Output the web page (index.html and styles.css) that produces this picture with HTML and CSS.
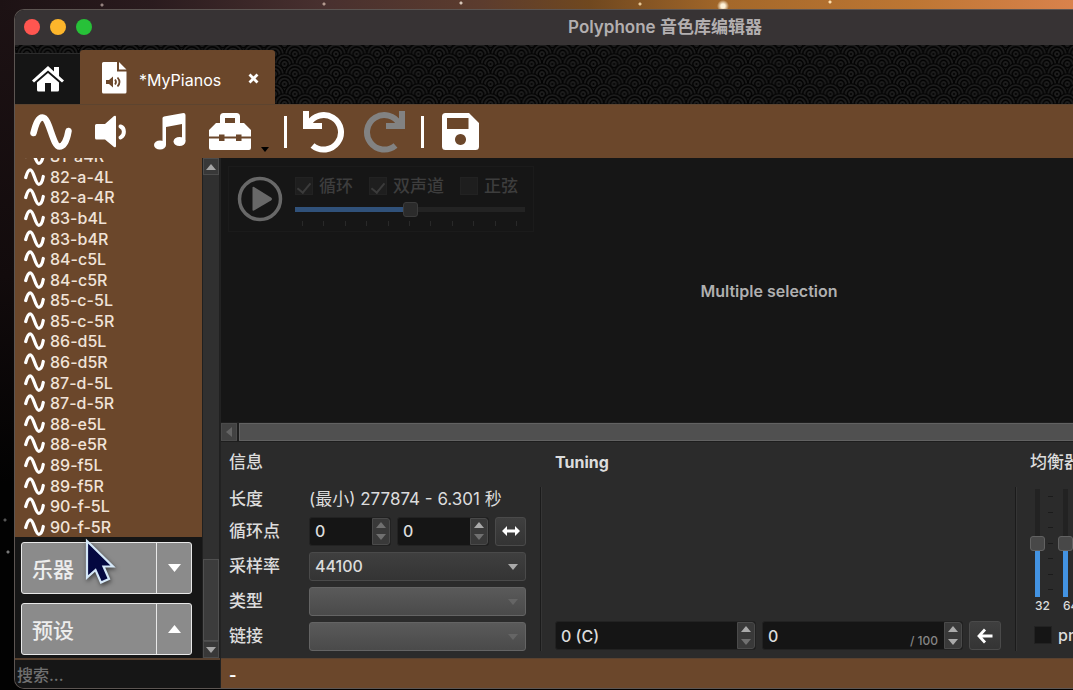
FILE: index.html
```html
<!DOCTYPE html>
<html lang="zh-CN">
<head>
<meta charset="utf-8">
<title>Polyphone 音色库编辑器</title>
<link rel="stylesheet" href="styles.css">
</head>
<body>
<svg class="defs" aria-hidden="true">
  <defs>
    <symbol id="wave" viewBox="0 0 42 36"><path d="M3.500 19C6 9 8.500 3.500 12.500 3.500C19.500 3.500 22.500 32.500 29.500 32.500C34 32.500 37 26 38.500 17" fill="none" stroke="#fff" stroke-width="6.500" stroke-linecap="round"/></symbol>
    <symbol id="up" viewBox="0 0 10 6"><path d="M0 6L5 0L10 6Z" fill="currentColor"/></symbol>
    <symbol id="down" viewBox="0 0 10 6"><path d="M0 0L5 6L10 0Z" fill="currentColor"/></symbol>
    <g id="scale"><circle r="10.800" stroke="none"/><circle r="8.800"/><circle r="5.300"/><circle r="2"/></g>
    <pattern id="scales" width="20.6" height="20" x="12" y="9" patternUnits="userSpaceOnUse">
      <g fill="#030303" stroke="#1d1d1d" stroke-width="1.8">
        <use href="#scale" x="10.3" y="-10"/>
        <use href="#scale"/><use href="#scale" x="20.6"/>
        <use href="#scale" x="10.3" y="10"/>
        <use href="#scale" y="20"/><use href="#scale" x="20.6" y="20"/>
        <use href="#scale" x="10.3" y="30"/>
      </g>
    </pattern>
  </defs>
</svg>

<div class="window">
  <header class="titlebar">
    <div class="lights"><button class="light red" aria-label="关闭"></button><button class="light yellow" aria-label="最小化"></button><button class="light green" aria-label="缩放"></button></div>
    <h1 class="title">Polyphone 音色库编辑器</h1>
  </header>

  <nav class="tabs">
    <svg class="tabs-pattern" aria-hidden="true"><rect width="100%" height="100%" fill="url(#scales)"/></svg>
    <button class="tab home" aria-label="主页">
      <svg width="32" height="26" viewBox="0 0 32 26" fill="#fff"><path d="M16 0L22 5.4V1H27V10L32 14.4L30 16.6L16 4.6L2 16.6L0 14.4Z"/><path d="M16 7L27 16.5V24Q27 25.5 25.5 25.5H19V17H13V25.5H6.500Q5 25.500 5 24V16.500Z"/></svg>
    </button>
    <div class="tab active">
      <svg width="25" height="32" viewBox="0 0 25 32"><path d="M1.500 0H15V9.500H24.500V30Q24.500 31.500 23 31.500H1.500Q0 31.500 0 30V1.500Q0 0 1.500 0ZM17 0L24.500 7.500H17Z" fill="#fff"/><path d="M4 18H7L11 14.500V25.500L7 22H4Z" fill="#6b472b"/><path d="M13 17.500Q15 20 13 22.500M15.500 15.500Q19.500 20 15.500 24.500" fill="none" stroke="#6b472b" stroke-width="1.800"/></svg>
      <span class="tab-name">*MyPianos</span>
      <button class="close" aria-label="关闭标签"><svg width="11" height="11" viewBox="0 0 11 11"><path d="M1.500 1.500L9.500 9.500M9.500 1.500L1.500 9.500" stroke="#fff" stroke-width="2.800"/></svg></button>
    </div>
  </nav>

  <div class="toolbar">
    <button class="tool" aria-label="采样"><svg width="42" height="36"><use href="#wave"/></svg></button>
    <button class="tool" aria-label="乐器"><svg width="32" height="34" viewBox="0 0 32 34"><path d="M1.500 9H10L19 1Q21 0 21 2V31Q21 33 19 32L10 24.500H1.500Q0 24.500 0 23V10.500Q0 9 1.500 9Z" fill="#fff"/><path d="M25.500 11.500C30 13 30 20.500 25.500 22.500" fill="none" stroke="#fff" stroke-width="4" stroke-linecap="round"/></svg></button>
    <button class="tool" aria-label="预设"><svg width="32" height="37" viewBox="0 0 32 37"><path d="M8.500 5Q8.500 4 10 3.500L29.500 0Q31.500 0 31.500 2V28H28V11L12 14V32H8.500Z" fill="#fff"/><ellipse cx="6" cy="32" rx="6" ry="4.500" fill="#fff"/><ellipse cx="25.500" cy="28.500" rx="6" ry="4.500" fill="#fff"/></svg></button>
    <button class="tool" aria-label="工具箱"><svg width="42" height="37" viewBox="0 0 42 37"><path d="M13.500 11V3.500Q13.500 2.500 14.500 2.500H27.500Q28.500 2.500 28.500 3.500V11" fill="none" stroke="#fff" stroke-width="5"/><path d="M7 10H35L42 17V23.500H32.500V21.500H27V23.500H15.500V21.500H10V23.500H0V17Z" fill="#fff"/><path d="M0 25.500H10V28H15.500V25.500H27V28H32.500V25.500H42V35Q42 37 40 37H2Q0 37 0 35Z" fill="#fff"/></svg></button>
    <svg class="tool-more" width="8" height="5"><use href="#down"/></svg>
    <span class="rule"></span>
    <button class="tool" aria-label="撤消"><svg width="42" height="42" viewBox="0 0 42 42"><path d="M5.500 13A17.300 17.300 0 1 1 9.500 34.500" fill="none" stroke="#fff" stroke-width="6"/><path d="M0 0H6V9L10 12H19V18H0Z" fill="#fff"/></svg></button>
    <button class="tool" disabled aria-label="重做"><svg width="42" height="42" viewBox="0 0 42 42"><path d="M36.500 13A17.300 17.300 0 1 0 32.500 34.500" fill="none" stroke="#828282" stroke-width="6"/><path d="M42 0H36V9L32 12H23V18H42Z" fill="#828282"/></svg></button>
    <span class="rule"></span>
    <button class="tool" aria-label="保存"><svg width="37" height="37" viewBox="0 0 37 37"><path fill-rule="evenodd" d="M3.500 0H27L37 10V33.500Q37 37 33.500 37H3.500Q0 37 0 33.500V3.500Q0 0 3.500 0ZM5 5V16H26.500V5ZM18.500 21A5.500 5.500 0 1 0 18.510 21Z" fill="#fff"/></svg></button>
  </div>

  <div class="content">
    <aside class="sidebar">
      <div class="tree">
        <div class="tree-body">
          <div class="samples-clip">
            <ul class="samples">
              <li><svg><use href="#wave"/></svg>81-a4R</li>
              <li><svg><use href="#wave"/></svg>82-a-4L</li>
              <li><svg><use href="#wave"/></svg>82-a-4R</li>
              <li><svg><use href="#wave"/></svg>83-b4L</li>
              <li><svg><use href="#wave"/></svg>83-b4R</li>
              <li><svg><use href="#wave"/></svg>84-c5L</li>
              <li><svg><use href="#wave"/></svg>84-c5R</li>
              <li><svg><use href="#wave"/></svg>85-c-5L</li>
              <li><svg><use href="#wave"/></svg>85-c-5R</li>
              <li><svg><use href="#wave"/></svg>86-d5L</li>
              <li><svg><use href="#wave"/></svg>86-d5R</li>
              <li><svg><use href="#wave"/></svg>87-d-5L</li>
              <li><svg><use href="#wave"/></svg>87-d-5R</li>
              <li><svg><use href="#wave"/></svg>88-e5L</li>
              <li><svg><use href="#wave"/></svg>88-e5R</li>
              <li><svg><use href="#wave"/></svg>89-f5L</li>
              <li><svg><use href="#wave"/></svg>89-f5R</li>
              <li><svg><use href="#wave"/></svg>90-f-5L</li>
              <li><svg><use href="#wave"/></svg>90-f-5R</li>
            </ul>
          </div>
          <div class="groups">
            <div class="group"><button class="group-name">乐器</button><button class="group-toggle" aria-label="展开乐器"><svg width="13" height="8"><use href="#down"/></svg></button></div>
            <div class="group"><button class="group-name">预设</button><button class="group-toggle" aria-label="折叠预设"><svg width="13" height="8"><use href="#up"/></svg></button></div>
          </div>
        </div>
        <div class="vscroll">
          <button class="scroll-btn" aria-label="向上滚动"><svg width="10" height="6"><use href="#up"/></svg></button>
          <div class="vthumb"></div>
          <button class="scroll-btn" aria-label="向下滚动"><svg width="10" height="6"><use href="#down"/></svg></button>
        </div>
      </div>
      <input class="search" type="text" placeholder="搜索..." aria-label="搜索">
      <svg class="pointer" width="32" height="48" viewBox="0 0 32 48" aria-hidden="true"><path d="M2 3L28 28.500H18.500L24 41L16 44.500L10.500 32L2 39.500Z" fill="#040840" stroke="#d5e8f8" stroke-width="2.200"/></svg>
    </aside>

    <main class="editor">
      <section class="graph">
        <div class="player">
          <button class="play" disabled aria-label="播放"><svg width="46" height="46" viewBox="0 0 46 46"><circle cx="23" cy="23" r="20.500" fill="none" stroke="#686868" stroke-width="3.500"/><path d="M15.500 11.500Q15.500 10.500 17 11L34 21.500Q36 23 34 24.500L17 34.500Q15.500 35 15.500 34Z" fill="#686868"/></svg></button>
          <div class="player-options">
            <div class="checks">
              <label class="check"><input type="checkbox" checked disabled>循环</label>
              <label class="check"><input type="checkbox" checked disabled>双声道</label>
              <label class="check"><input type="checkbox" disabled>正弦</label>
            </div>
            <input class="volume" type="range" min="0" max="100" value="50" disabled aria-label="音量">
            <div class="ticks"><i></i><i></i><i></i><i></i><i></i><i></i><i></i><i></i><i></i><i></i><i></i></div>
          </div>
        </div>
        <p class="message">Multiple selection</p>
      </section>
      <div class="hscroll"><button class="scroll-btn dim" aria-label="向左滚动"><svg width="6" height="10" viewBox="0 0 6 10"><path d="M6 0L0 5L6 10Z" fill="currentColor"/></svg></button><div class="hthumb"></div></div>

      <section class="panel">
        <h2 class="h-info">信息</h2>
        <h2 class="h-tuning">Tuning</h2>
        <h2 class="h-eq">均衡器</h2>
        <div class="info">
          <span>长度</span><span class="length">(最小) 277874 - 6.301 秒</span>
          <label for="loop">循环点</label>
          <div class="loop">
            <div class="spin"><input id="loop" type="text" value="0"><div class="steps"><button class="dim" aria-label="增加"><svg><use href="#up"/></svg></button><button class="dim" aria-label="减少"><svg><use href="#down"/></svg></button></div></div>
            <div class="spin"><input type="text" value="0" aria-label="循环终点"><div class="steps"><button aria-label="增加"><svg><use href="#up"/></svg></button><button class="dim" aria-label="减少"><svg><use href="#down"/></svg></button></div></div>
            <button class="square" aria-label="全范围"><svg width="18" height="10" viewBox="0 0 18 10"><path d="M0 5L5 0V3.500H13V0L18 5L13 10V6.500H5V10Z" fill="#fff"/></svg></button>
          </div>
          <label for="rate">采样率</label>
          <div class="combo"><select id="rate"><option>44100</option></select><svg><use href="#down"/></svg></div>
          <label for="type">类型</label>
          <div class="combo off"><select id="type" disabled></select><svg><use href="#down"/></svg></div>
          <label for="link">链接</label>
          <div class="combo off"><select id="link" disabled></select><svg><use href="#down"/></svg></div>
        </div>
        <div class="divider"></div>
        <div class="tuning">
          <div class="spin"><input type="text" value="0 (C)" aria-label="根音"><div class="steps"><button aria-label="增加"><svg><use href="#up"/></svg></button><button class="dim" aria-label="减少"><svg><use href="#down"/></svg></button></div></div>
          <div class="spin"><input type="text" value="0" aria-label="修正"><span class="suffix">/ 100</span><div class="steps"><button aria-label="增加"><svg><use href="#up"/></svg></button><button aria-label="减少"><svg><use href="#down"/></svg></button></div></div>
          <button class="square" aria-label="应用"><svg width="16" height="16" viewBox="0 0 16 16"><path d="M8 1.500L2 8L8 14.500M2 8H15.500" fill="none" stroke="#fff" stroke-width="2.800"/></svg></button>
        </div>
        <div class="divider"></div>
        <div class="eq">
          <div class="bands">
            <input id="b32" class="band" type="range" min="-15" max="15" value="0">
            <div class="band-ticks"><i></i><i></i><i></i><i></i><i></i><i></i><i></i></div>
            <input id="b64" class="band" type="range" min="-15" max="15" value="0">
          </div>
          <div class="band-labels"><label for="b32">32</label><label for="b64">64</label></div>
          <label class="check eq-check"><input type="checkbox">pr</label>
        </div>
      </section>
      <footer class="status">-</footer>
    </main>
  </div>
</div>
</body>
</html>
```
FILE: styles.css
```css
* { box-sizing: border-box; }

body {
  margin: 0;
  height: 100vh;
  padding: 9px 0 1px 14px;
  overflow: hidden;
  font: 500 16px/20px Inter, "Noto Sans CJK SC", sans-serif;
  color: #dcdcdc;
  background:
    radial-gradient(circle at 723px 6px, #fff2d8 0 2px, #fff2d800 6px),
    radial-gradient(circle at 102px 5px, #94827f 0 1px, transparent 2px),
    radial-gradient(circle at 324px 4px, #b39a90 0 1px, transparent 2px),
    radial-gradient(circle at 461px 3px, #d8c6b8 0 1px, transparent 2px),
    radial-gradient(circle at 640px 4px, #e9c896 0 1px, transparent 2px),
    radial-gradient(circle at 830px 2px, #ffe0ae 0 1px, transparent 2px),
    radial-gradient(circle at 8px 552px, #777 0 1px, transparent 2px),
    radial-gradient(circle at 5px 520px, #555 0 1px, transparent 2px),
    linear-gradient(90deg, #1d1214, #2a1b1e 14%, #48302f 30%, #5c3c2e 45%, #70481f 55%, #a4682a 68%, #bd7633 85%, #d9824c) 0 0 / 100% 10px no-repeat,
    linear-gradient(#1d1214, #120b0c 40%, #020202 70%);
}

button { margin: 0; padding: 0; border: 0; background: none; color: inherit; font: inherit; }
input, select { margin: 0; font: inherit; color: inherit; }
h1, h2, p, ul { margin: 0; padding: 0; }
svg { display: block; flex: none; }
.defs { position: absolute; width: 0; height: 0; }

.window {
  height: 100%;
  display: flex;
  flex-direction: column;
  overflow: hidden;
  border: solid #5c5552;
  border-width: 1px 0 1px 1px;
  border-radius: 10px 0 0 10px;
  background: #161616;
}

/* Title bar */
.titlebar { display: flex; align-items: center; height: 35px; flex: none; padding-bottom: 1px; background: #373334; }
.lights { display: flex; gap: 10px; width: 242px; padding-left: 9px; }
.light { width: 16px; height: 16px; border-radius: 50%; }
.red { background: #ff5650; }
.yellow { background: #fdb62b; }
.green { background: #27c138; }
.title { flex: 1; text-align: center; font-size: 17px; font-weight: 600; color: #b3afb0; }

/* Tabs */
.tabs { position: relative; display: flex; align-items: flex-end; height: 59px; flex: none; background: #030303; }
.tabs-pattern { position: absolute; inset: 0; width: 100%; height: 100%; }
.tab { position: relative; display: flex; align-items: center; }
.home { width: 65px; height: 51px; justify-content: center; background: #151515; border-top: 1px solid #2c2c2c; }
.active { width: 195px; height: 54px; padding: 2px 16px 0 22px; gap: 12px; background: #6b472b; border-radius: 3px 3px 0 0; color: #fff; }
.tab-name { flex: 1; padding-top: 4px; font-weight: 400; }
.close { padding: 0; }

/* Toolbar */
.toolbar { display: flex; align-items: center; height: 54px; flex: none; padding-left: 15px; background: #6b472b; border-top: 1px solid #5d442f; }
.tool + .tool { margin-left: 23px; }
.tool:nth-child(3) { margin-left: 27px; }
.tool + .tool[disabled] { margin-left: 18px; }
.toolbar .tool-more { align-self: flex-end; margin: 0 15px 6px 10px; color: #000; }
.rule { width: 3px; height: 32px; background: #fff; margin-right: 16px; }
.tool + .rule { margin-left: 16px; }
.rule + .tool:last-child { margin-left: 2px; }

/* Sidebar */
.content { flex: 1; min-height: 0; display: flex; }
.sidebar { position: relative; flex: none; width: 205px; display: flex; flex-direction: column; }
.tree { flex: 1; min-height: 0; display: flex; }
.tree-body { flex: 1; display: flex; flex-direction: column; min-height: 0; }
.samples-clip { flex: 1; min-height: 0; overflow: hidden; display: flex; background: #6b472b; }
.samples { flex: 1; margin-top: -12px; display: grid; grid-template-rows: repeat(19, 1fr); list-style: none; color: #f1e3d8; }
.samples li { display: flex; align-items: center; gap: 5px; padding-left: 9px; min-height: 0; }
.samples svg { width: 21px; height: 18px; }
.groups { display: flex; flex-direction: column; gap: 9px; padding: 5px 10px 3px 6px; }
.group { display: flex; height: 52px; border: 1px solid #e8e8e8; border-radius: 3px; background: #8b8b8b; color: #fff; }
.group-name { flex: 1; padding: 4px 0 0 10px; text-align: left; font-size: 21px; color: #ededed; }
.group-toggle { width: 35px; display: grid; place-items: center; border-left: 1px solid #e8e8e8; }
.vscroll { width: 18px; display: flex; flex-direction: column; justify-content: space-between; background: #303030; border: solid #202020; border-width: 0 1px; }
.scroll-btn { display: grid; place-items: center; flex: none; width: 16px; height: 17px; border: 1px solid #4b4b4b; background: #383838; color: #a5a5a5; }
.vthumb { height: 82px; margin-top: auto; border: 1px solid #505050; background: #3c3c3c; }
.search { width: 100%; height: 30px; padding: 2px 2px 0; border: 0; border-top: 2px solid #57402e; background: #161616; outline: 0; }
.search::placeholder { color: #707070; }
.pointer { position: absolute; left: 70px; bottom: 102px; filter: drop-shadow(1px 2px 2px #0008); }

/* Editor */
.editor { flex: 1; min-width: 0; display: flex; flex-direction: column; border-left: 1px solid #222; }
.graph { position: relative; flex: 1; display: flex; align-items: center; justify-content: center; padding-left: 244px; background: #161616; }
.message { padding-top: 2px; font-weight: 600; color: #b0b0b0; }
.player { position: absolute; left: 7px; top: 8px; display: flex; gap: 12px; padding: 9px 8px 5px; border: 1px solid #1b1b1b; }
.play { align-self: flex-start; }
.player-options { width: 230px; }
.checks { display: flex; gap: 16px; }
.check { display: flex; align-items: center; gap: 6px; white-space: nowrap; }
.checks .check { color: #3d3d3d; font-size: 17px; }
.check input { appearance: none; flex: none; width: 18px; height: 18px; display: grid; place-items: center; background: #151515; border: 1px solid #222; }
.checks input { background: #1e1e1e; }
.check input:checked::before { content: ""; width: 6px; height: 11px; border: solid #3b3b3b; border-width: 0 2px 2px 0; transform: rotate(40deg); }
.volume { appearance: none; display: block; width: 230px; height: 16px; margin-top: 5px; background: linear-gradient(90deg, #30517a 50%, #232323 50%) center / 100% 5px no-repeat; }
.volume::-webkit-slider-thumb { appearance: none; width: 15px; height: 15px; border: 1px solid #3b3b3b; border-radius: 3px; background: #2b2b2b; }
.ticks { display: flex; justify-content: space-between; padding: 4px 8px 0 7px; }
.ticks i { width: 1px; height: 5px; background: #292929; }

.hscroll { display: flex; gap: 2px; height: 20px; flex: none; padding: 1px 0; background: #1e1e1e; }
.hscroll .scroll-btn { height: 18px; background: #424242; }
.hthumb { flex: 1; border: 1px solid #626262; border-right: 0; background: #505050; }
.dim { color: #646464; }

/* Property panel */
.panel { flex: none; display: grid; grid-template: 26px auto / 297px 1px 1fr 1px 43px; column-gap: 14px; row-gap: 12px; padding: 7px 0 7px 8px; background: #2b2b2b; overflow: hidden; }
h2 { font-size: 16px; line-height: 26px; font-weight: 700; white-space: nowrap; }
.h-info { grid-column: 1; font-weight: 500; font-size: 17px; }
.h-tuning { grid-column: 3; }
.h-eq { grid-column: 5; font-weight: 500; font-size: 17px; }
.divider { border-left: 1px solid #1b1b1b; box-shadow: 1px 0 #353535; }
.info { grid-column: 1; display: grid; grid-template: 24px repeat(4, 30px) / 80px 1fr; row-gap: 5px; align-items: center; white-space: nowrap; }
.info > label, .info > span { font-size: 17px; }
.info > .length { font-weight: 400; }
.loop { display: grid; grid-template-columns: 82px 1fr 31px; gap: 6px; }
.spin { display: flex; height: 29px; min-width: 0; background: #151515; border: 1px solid #222; border-radius: 3px; }
.spin input { flex: 1; width: 0; min-width: 0; padding: 0 5px; border: 0; outline: 0; background: none; }
.steps { width: 18px; display: flex; flex-direction: column; background: #393939; border: 1px solid #4a4a4a; border-radius: 0 3px 3px 0; color: #aaa; }
.steps button { flex: 1; display: grid; place-items: center; }
.steps svg { width: 10px; height: 6px; }
.steps .dim { color: #707070; }
.square { display: grid; place-items: center; height: 29px; border: 1px solid #4a4a4a; border-radius: 3px; background: linear-gradient(#3f3f3f, #343434); }
.combo { position: relative; height: 29px; }
.combo select { appearance: none; width: 100%; height: 100%; padding: 0 5px; border: 1px solid #4a4a4a; border-radius: 3px; background: linear-gradient(#3f3f3f, #343434); opacity: 1; }
.combo svg { position: absolute; right: 8px; top: 12px; width: 10px; height: 6px; color: #aaa; pointer-events: none; }
.combo.off select { background: linear-gradient(#5a5a5a, #4a4a4a); border-color: #646464; }
.combo.off svg { color: #656565; }
.tuning { align-self: end; display: grid; grid-template-columns: 1fr 1fr 32px; gap: 6px; padding-bottom: 1px; }
.suffix { align-self: flex-end; padding: 0 6px 0 0; font-size: 12px; line-height: 16px; color: #858585; }

/* Equalizer */
.eq { min-width: 0; display: flex; flex-direction: column; align-items: flex-start; }
.bands { display: flex; gap: 4px; height: 112px; }
.band { writing-mode: vertical-lr; direction: rtl; appearance: none; width: 14px; height: 112px; background: linear-gradient(#222 50%, #4393e2 50%) center / 5px 108px no-repeat; }
.band::-webkit-slider-thumb { appearance: none; width: 15px; height: 15px; border: 1px solid #626262; border-radius: 3px; background: #484848; }
.band-ticks { width: 5px; display: flex; flex-direction: column; justify-content: space-between; padding: 9px 0; }
.bands .band:last-child { margin-left: 1px; }
.band-ticks i { height: 1px; background: #1b1b1b; }
.band-labels { display: flex; gap: 13px; padding-left: 5px; font-size: 12px; line-height: 14px; }
.eq-check { padding: 12px 0 0 4px; }

.status { flex: none; height: 30px; padding: 6px 8px 0; border-top: 1px solid #5a4230; background: #6b472b; color: #fff; font-weight: 700; }
```
